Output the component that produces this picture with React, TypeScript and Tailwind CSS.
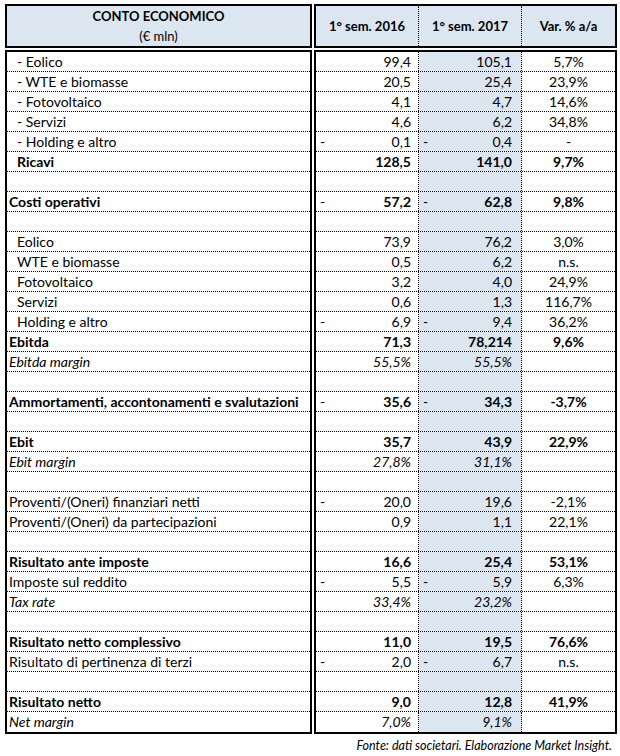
import React from "react";

type Cell = { n?: boolean; v: string };
type Row = {
  l: string;
  ind?: boolean;
  s?: "b" | "i";
  a?: Cell;
  b?: Cell;
  c?: string;
};

const rows: Row[] = [
  { l: "- Eolico", ind: true, a: { v: "99,4" }, b: { v: "105,1" }, c: "5,7%" },
  { l: "- WTE e biomasse", ind: true, a: { v: "20,5" }, b: { v: "25,4" }, c: "23,9%" },
  { l: "- Fotovoltaico", ind: true, a: { v: "4,1" }, b: { v: "4,7" }, c: "14,6%" },
  { l: "- Servizi", ind: true, a: { v: "4,6" }, b: { v: "6,2" }, c: "34,8%" },
  { l: "- Holding e altro", ind: true, a: { n: true, v: "0,1" }, b: { n: true, v: "0,4" }, c: "-" },
  { l: "Ricavi", ind: true, s: "b", a: { v: "128,5" }, b: { v: "141,0" }, c: "9,7%" },
  { l: "" },
  { l: "Costi operativi", s: "b", a: { n: true, v: "57,2" }, b: { n: true, v: "62,8" }, c: "9,8%" },
  { l: "" },
  { l: "Eolico", ind: true, a: { v: "73,9" }, b: { v: "76,2" }, c: "3,0%" },
  { l: "WTE e biomasse", ind: true, a: { v: "0,5" }, b: { v: "6,2" }, c: "n.s." },
  { l: "Fotovoltaico", ind: true, a: { v: "3,2" }, b: { v: "4,0" }, c: "24,9%" },
  { l: "Servizi", ind: true, a: { v: "0,6" }, b: { v: "1,3" }, c: "116,7%" },
  { l: "Holding e altro", ind: true, a: { n: true, v: "6,9" }, b: { n: true, v: "9,4" }, c: "36,2%" },
  { l: "Ebitda", s: "b", a: { v: "71,3" }, b: { v: "78,214" }, c: "9,6%" },
  { l: "Ebitda margin", s: "i", a: { v: "55,5%" }, b: { v: "55,5%" } },
  { l: "" },
  { l: "Ammortamenti, accontonamenti e svalutazioni", s: "b", a: { n: true, v: "35,6" }, b: { n: true, v: "34,3" }, c: "-3,7%" },
  { l: "" },
  { l: "Ebit", s: "b", a: { v: "35,7" }, b: { v: "43,9" }, c: "22,9%" },
  { l: "Ebit margin", s: "i", a: { v: "27,8%" }, b: { v: "31,1%" } },
  { l: "" },
  { l: "Proventi/(Oneri) finanziari netti", a: { n: true, v: "20,0" }, b: { v: "19,6" }, c: "-2,1%" },
  { l: "Proventi/(Oneri) da partecipazioni", a: { v: "0,9" }, b: { v: "1,1" }, c: "22,1%" },
  { l: "" },
  { l: "Risultato ante imposte", s: "b", a: { v: "16,6" }, b: { v: "25,4" }, c: "53,1%" },
  { l: "Imposte sul reddito", a: { n: true, v: "5,5" }, b: { n: true, v: "5,9" }, c: "6,3%" },
  { l: "Tax rate", s: "i", a: { v: "33,4%" }, b: { v: "23,2%" } },
  { l: "" },
  { l: "Risultato netto complessivo", s: "b", a: { v: "11,0" }, b: { v: "19,5" }, c: "76,6%" },
  { l: "Risultato di pertinenza di terzi", a: { n: true, v: "2,0" }, b: { n: true, v: "6,7" }, c: "n.s." },
  { l: "" },
  { l: "Risultato netto", s: "b", a: { v: "9,0" }, b: { v: "12,8" }, c: "41,9%" },
  { l: "Net margin", s: "i", a: { v: "7,0%" }, b: { v: "9,1%" } },
];

function styleCls(s?: "b" | "i") {
  if (s === "b") return "font-bold";
  if (s === "i") return "italic";
  return "";
}

function NumCell({ c, s, shaded }: { c?: Cell; s?: "b" | "i"; shaded?: boolean }) {
  return (
    <div
      className={`flex h-full items-center justify-between pl-[4px] border-r border-dotted border-black ${
        shaded ? "bg-[#dce6f1] pr-[9px]" : "pr-[7px]"
      } ${styleCls(s)}`}
    >
      <span className="font-normal not-italic">{c && c.n ? "-" : ""}</span>
      <span>{c ? c.v : ""}</span>
    </div>
  );
}

export default function App() {
  const font = { fontFamily: "Lato, 'Liberation Sans', sans-serif" };
  return (
    <div className="w-[620px] h-[756px] bg-white text-black text-[14px] leading-none" style={font}>
      <div className="flex gap-[2px] pl-[5px] pt-[4px]">
        {/* Left table */}
        <div className="flex w-[307px] flex-col gap-[2px]">
          <div className="flex h-[44px] flex-col items-center justify-center gap-[7px] border-2 border-black bg-[#dce6f1] text-[13px]">
            <div className="font-bold">CONTO ECONOMICO</div>
            <div>(€ mln)</div>
          </div>
          <div className="border-2 border-black">
            {rows.map((r, i) => (
              <div
                key={i}
                className={`flex h-[20px] items-center whitespace-nowrap ${
                  i < rows.length - 1 ? "border-b border-dotted border-black" : ""
                } ${r.ind ? "pl-[10px]" : "pl-[2px]"} ${styleCls(r.s)}`}
              >
                {r.l}
              </div>
            ))}
          </div>
        </div>
        {/* Right table */}
        <div className="flex w-[303px] flex-col gap-[2px]">
          <div className="grid h-[44px] grid-cols-[103px_103px_93px] border-2 border-black bg-[#dce6f1] text-[13px] font-bold">
            <div className="flex items-center justify-center border-r border-dotted border-black">1° sem. 2016</div>
            <div className="flex items-center justify-center border-r border-dotted border-black">1° sem. 2017</div>
            <div className="flex items-center justify-center">Var. % a/a</div>
          </div>
          <div className="border-2 border-black">
            {rows.map((r, i) => (
              <div
                key={i}
                className={`grid h-[20px] grid-cols-[103px_103px_93px] ${
                  i < rows.length - 1 ? "border-b border-dotted border-black" : ""
                }`}
              >
                <NumCell c={r.a} s={r.s} />
                <NumCell c={r.b} s={r.s} shaded />
                <div className={`flex h-full items-center justify-center ${styleCls(r.s)}`}>{r.c ?? ""}</div>
              </div>
            ))}
          </div>
        </div>
      </div>
      <div className="pr-[8px] pt-[6px] text-right text-[12.5px] italic">
        Fonte: dati societari. Elaborazione Market Insight.
      </div>
    </div>
  );
}
